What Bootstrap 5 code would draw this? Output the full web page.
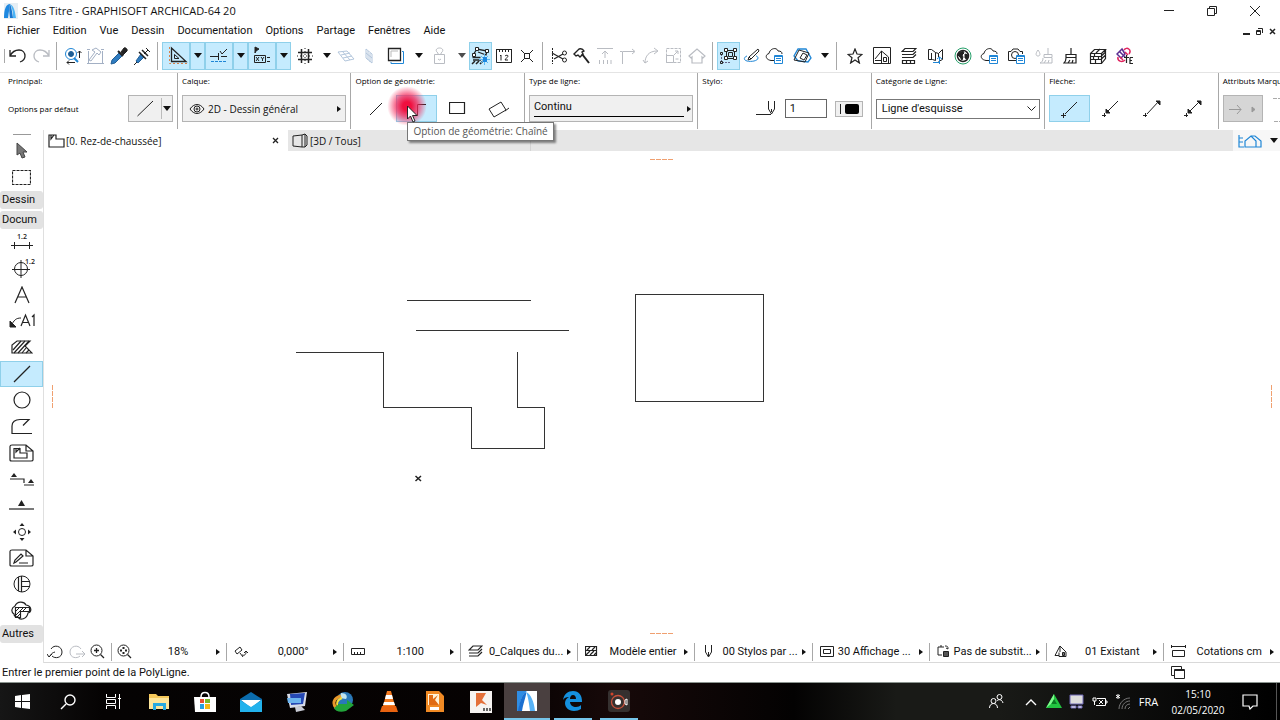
<!DOCTYPE html>
<html lang="fr">
<head>
<meta charset="utf-8">
<meta name="viewport" content="width=device-width, initial-scale=1">
<title>Sans Titre - GRAPHISOFT ARCHICAD-64 20</title>
<link href="https://cdn.jsdelivr.net/npm/bootstrap@5.3.0/dist/css/bootstrap.min.css" rel="stylesheet">
<style>
:root { --hot: #c5ebfe; --hot-line: #8fd0ea; --rule: #a8a8a8; --blue: #1f86d6; }
body { font: 11px/16px Roboto, "Open Sans", sans-serif; color: #111; background: #fff; overflow: hidden; }
button, input, select { font: inherit; color: inherit; }
svg { display: block; flex: none; fill: none; stroke: #222; stroke-width: 1; }
svg text { font-family: "Open Sans", sans-serif; fill: #222; stroke: none; }
.gray { stroke: #b9bcc2; }
.plain { border: 0; background: none; padding: 0; display: flex; align-items: center; justify-content: center; flex: none; }
.wide-text { font-family: "Open Sans", sans-serif; }
.label-text { font: 8px/12px "Open Sans", sans-serif; color: #000; }

.title-row { height: 21px; }
.menu-row { height: 20px; }
.menu-row a { color: #111; text-decoration: none; }
.win-btn { width: 43px; height: 20px; }

.tool-row { height: 32px; border-bottom: 1px solid #e4e4e4; padding-bottom: 2px; }
.tb { width: 23px; height: 28px; }
.tb-m { width: 27px; height: 28px; }
.tb-w { width: 28px; height: 28px; }
.tb-x { width: 31px; height: 28px; }
.dd { width: 15px; height: 28px; }
.on { background: var(--hot); box-shadow: inset 0 0 0 1px var(--hot-line); }
.vsep { width: 9px; height: 28px; flex: none; background: linear-gradient(var(--rule), var(--rule)) center / 1px 100% no-repeat; }
.arrow-d { width: 0; height: 0; border: 4px solid transparent; border-top: 5px solid #111; border-bottom: 0; }
.arrow-r { width: 0; height: 0; border: 3px solid transparent; border-left: 4px solid #111; border-right: 0; flex: none; }

.info-row { height: 56px; overflow-x: clip; }
.info-cell { width: 13.55%; flex: none; border-right: 1px solid var(--rule); padding: 2px 4px 0; }
.info-cell:first-child { width: 178px; padding-left: 8px; }
.info-cell:last-child { border: 0; }
.info-body { height: 43px; }
.flat { background: #f0f0f0; border: 1px solid #b4b4b4; height: 27px; }
.split-btn { width: 45px; }
.geo { width: 41px; height: 27px; }
.pen-box { width: 42px; height: 19px; border: 1px solid #666; padding: 0 4px; }
.cat-box { width: 165px; height: 20px; border: 1px solid #777; padding: 0 5px; background: #fff; appearance: none; }
.spot { left: 36px; top: 13px; width: 40px; height: 40px; background: radial-gradient(circle, #f0103f 0 15%, rgba(244, 40, 90, .75) 38%, rgba(255, 120, 160, 0) 70%); }
.pointer { left: 56px; top: 32px; z-index: 3; }
.tip { left: 56px; top: 49px; z-index: 2; height: 19px; border: 1px solid #777; background: #fff; color: #555; padding: 0 5px; box-shadow: 2px 2px 2px rgba(0, 0, 0, .45); white-space: nowrap; }

.palette { width: 44px; flex: none; border-right: 1px solid #dfdfdf; }
.palette .tool { width: 43px; min-height: 0; flex: 1 1 0; }
.palette .fixed-tool { width: 43px; height: 27px; }
.group-btn { width: 43px; height: 18px; background: #e2e2e2; border: 0; border-radius: 3px; padding: 0 0 0 2px; text-align: left; line-height: 16px; }
.tab-row { height: 21px; background: #e6e6e6; }
.tab-a { width: 244px; background: #fff; }
.tab-b { width: 243px; border-right: 1px solid #d4d4d4; }
.nav-pop { width: 47px; background: #f7f7f7; }
.quick { height: 22px; border-bottom: 1px solid #d9d9d9; }
.quick-zoom { width: 67px; }
.quick-item { flex: 1 1 0; min-width: 0; border-left: 1px solid var(--rule); height: 18px; padding: 0 6px 0 7px; white-space: nowrap; }
.status-row { height: 20px; border-bottom: 1px solid #8b948f; }
.doc-area { min-height: 0; }

.task-row { height: 37px; background: linear-gradient(90deg, #161616 0, #050303 8%, #060202 40%, #170909 48%, #030202 62%, #191a17 70%, #191a17 78%, #060606 94%, #000 100%); color: #fff; }
.task-row svg { stroke: #fff; }
.tk { width: 45px; height: 37px; }
.ta { width: 46px; height: 37px; }
.run { border-bottom: 2px solid #76c5ea; width: 38px; margin: 0 4px; }
.front { background: #4a4040; border-bottom: 2px solid #76c5ea; }
.tray { width: 23px; height: 37px; }
.clock { width: 70px; text-align: center; }
.edge { width: 10px; height: 37px; border-right: 1px solid #555; margin-right: 3px; }
</style>
</head>
<body class="d-flex flex-column vh-100">

<header class="position-relative z-3">
  <div class="title-row d-flex align-items-center pe-1">
    <svg class="ms-1 me-1" width="14" height="16" viewBox="0 0 14 16" style="stroke:none"><path fill="#e6eef4" d="M0 0h14v16H0z"/><path fill="#1e88e0" d="M0 15C0 6 2 1 6 1L4 15z"/><path fill="#4db4f5" d="M6 1c4 2 5 7 6 14H9C9 8 8 4 6 1z"/><path fill="#1976cf" d="M6 1c2 4 2 9 3 14H6C5 9 5 5 6 1z"/></svg>
    <span class="flex-grow-1 wide-text">Sans Titre - GRAPHISOFT ARCHICAD-64 20</span>
    <button class="plain win-btn" aria-label="Réduire"><svg width="10" height="10"><path d="M0 4.500h10"/></svg></button>
    <button class="plain win-btn" aria-label="Restaurer"><svg width="10" height="10"><path d="M.5 2.500h7v7h-7zM2.500 2V.5h7v7H8"/></svg></button>
    <button class="plain win-btn" aria-label="Fermer"><svg width="10" height="10"><path d="M0 0l10 10M10 0L0 10"/></svg></button>
  </div>
  <nav class="menu-row d-flex align-items-center" aria-label="Menu principal">
    <div class="d-flex flex-grow-1" style="gap:13px;padding-left:7px">
      <a href="#">Fichier</a><a href="#">Edition</a><a href="#">Vue</a><a href="#">Dessin</a><a href="#">Documentation</a><a href="#">Options</a><a href="#">Partage</a><a href="#">Fenêtres</a><a href="#">Aide</a>
    </div>
    <div class="d-flex pe-1" style="gap:6px">
      <button class="plain" aria-label="Réduire le document"><svg width="7" height="8"><path stroke-width="2" d="M0 7h7"/></svg></button>
      <button class="plain" aria-label="Restaurer le document"><svg width="7" height="8"><path d="M.5 3.500h4v4h-4zM2 1.500h4.500V6"/><path d="M0 4.500h5"/></svg></button>
      <button class="plain" aria-label="Fermer le document"><svg width="7" height="8"><path stroke-width="1.500" d="M1 2l5 5M6 2L1 7"/></svg></button>
    </div>
  </nav>

  <div class="tool-row d-flex align-items-center ps-1" role="toolbar" aria-label="Barre standard">
    <span style="width:2px;height:14px;border-left:1px solid #a8a8a8"></span>
    <button class="plain tb" aria-label="Annuler"><svg width="20" height="18" viewBox="0 0 20 18"><path stroke-width="1.300" d="M2 3v6h6M2 9c2-4 5-6 9-6 4 0 6 3 6 6s-2 5-5 6"/></svg></button>
    <button class="plain tb" aria-label="Rétablir"><svg class="gray" width="20" height="18" viewBox="0 0 20 18"><path stroke-width="1.300" d="M18 3v6h-6M18 9c-2-4-5-6-9-6-4 0-6 3-6 6s2 5 5 6"/></svg></button>
    <span class="vsep"></span>
    <button class="plain tb" aria-label="Rechercher"><svg width="20" height="20" viewBox="0 0 20 20"><circle cx="8" cy="8" r="5.500" stroke="#1f86d6"/><circle cx="8" cy="8" r="2.500" fill="#1f5f96" stroke="#1f5f96"/><path stroke="#1f86d6" stroke-width="2" d="M11 12l4 4"/><path d="M16.500 12V5M14.500 7l2-2 2 2M12 16.500H4M6 14.500l-2 2 2 2"/></svg></button>
    <button class="plain tb" aria-label="Options"><svg width="20" height="20" viewBox="0 0 20 20" style="stroke:#a3b0c4"><path d="M2.500 5v12.500h14V5"/><path d="M1 3.500h3M15 3.500h3M1 17.500h3M15 17.500h3M6 4l4-2 5 4-2 3-2-2-6 8-2-1 6-8z"/></svg></button>
    <button class="plain tb" aria-label="Prélever"><svg width="18" height="20" viewBox="0 0 18 20"><path fill="#2f7cc0" stroke="#235f96" d="M9 7l3 3-7 7-4 1 1-4z"/><path stroke-width="2" d="M8 5l5 5"/><path fill="#222" d="M11 6l3-4c1-1 4 1 3 3l-4 4z"/></svg></button>
    <button class="plain tb" aria-label="Injecter"><svg width="18" height="20" viewBox="0 0 18 20"><path fill="#2f7cc0" stroke="#235f96" d="M8 8l3 3-6 6-2-2z"/><path d="M4 16l-3 3M11 8l4-4M13 2l4 4"/><path stroke-width="1.500" d="M6 6l7 7M9 4l6 6"/></svg></button>
    <span class="vsep"></span>
    <button class="plain tb-w on" aria-label="Lignes guides"><svg class="ms-1" width="20" height="20" viewBox="0 0 20 20"><path stroke-width="1.300" d="M3.500 2v13.500H18z"/><path d="M6.500 8.500v4h4.500z"/><path stroke="#d9814a" stroke-dasharray="2 2" d="M1.500 1v16.500H20"/></svg></button><button class="plain dd on" aria-label="Menu lignes guides"><span class="arrow-d"></span></button>
    <button class="plain tb-w on" aria-label="Accrochage"><svg width="20" height="20" viewBox="0 0 20 20"><path d="M1 10.500h8M9.500 7v7M12 10.500h6M11 5l2 3 5-5"/><path stroke="#1f86d6" stroke-dasharray="3 1" d="M2 15.500h16"/></svg></button><button class="plain dd on" aria-label="Menu accrochage"><span class="arrow-d"></span></button>
    <button class="plain tb-w on" aria-label="Coordonnées"><svg width="20" height="20" viewBox="0 0 20 20"><path fill="#222" d="M3 7V1l4 2-3 2z"/><path d="M2.500 9.500h11v7h-11zM15 11.500h3M15 15.500h3"/><path d="M4 11l3 4M7 11l-3 4M9 11l1.500 2L12 11M10.500 13v2"/></svg></button><button class="plain dd on" aria-label="Menu coordonnées"><span class="arrow-d"></span></button>
    <button class="plain tb-w" aria-label="Trame"><svg width="18" height="18" viewBox="0 0 18 18"><path stroke-width="1.500" d="M5.500 2v14M12.500 2v14M2 5.500h14M2 12.500h14"/><path stroke-dasharray="1 2" d="M9 1v16M1 9h16"/></svg></button><button class="plain dd" aria-label="Menu trame"><span class="arrow-d"></span></button>
    <button class="plain tb" aria-label="Plan de travail"><svg width="20" height="14" viewBox="0 0 20 14"><path stroke="#b3c6dc" d="M2 3l9-1 7 8-9 2zM5 6l9-2M7 9l9-2M6 2l8 9"/></svg></button>
    <button class="plain tb" aria-label="Plan vertical"><svg width="12" height="18" viewBox="0 0 12 18"><path stroke="#b3c6dc" d="M3 2l6 5v9l-6-5zM5 4v9M7 6v9M3 6l6 5"/></svg></button>
    <button class="plain tb-x" aria-label="Référence"><svg width="18" height="18" viewBox="0 0 18 18"><path stroke-width="1.300" d="M1.500 1.500h12v12h-12z"/><path d="M4 10V4h7" stroke="#bbb"/><path stroke="#1f86d6" d="M15 4.500h1.500v12H4V15"/></svg></button><button class="plain dd" aria-label="Menu référence"><span class="arrow-d"></span></button>
    <button class="plain tb-w" aria-label="Verrouiller"><svg class="gray" width="16" height="20" viewBox="0 0 16 20"><path d="M2.500 8.500h10v9h-10zM4.500 8.500h6M6 7C3 5 4 2 7.500 2S12 5 9 7v1M6 7v1M6 13l1.500 1L9 13"/></svg></button><button class="plain dd" aria-label="Menu verrou"><span class="arrow-d opacity-75"></span></button>
    <button class="plain tb on" aria-label="Suivi"><svg width="20" height="20" viewBox="0 0 20 20"><path stroke-width="1.300" d="M2 9l4-6 10 2-1 4-8-3M1.500 11.500h8M2 14h8"/><path fill="#fff" d="M4.500 1.500h3v3h-3zM14.500 3.500h3v3h-3zM1.500 7.500h3v3h-3z"/><path stroke-width="1.500" d="M1 18l3-3M5 18l3-3M9 18l3-3"/><path stroke="#5cb8f2" d="M13.500 8v11M8 13.500h11M10 10l7 7M17 10l-7 7"/><path stroke="none" fill="#1e88e0" d="M12 11h4v5h-4z"/></svg></button>
    <button class="plain tb" aria-label="Mesurer"><svg width="18" height="16" viewBox="0 0 18 16"><path d="M1.500 1v13.500h15V1M1 1.500h16M4.500 1v3M7.500 1v3M10.500 1v3M13.500 1v3"/><path d="M5 8l1-1v5.500M10 8c1-1 3-1 3 0s-2 2-3 4h3"/></svg></button>
    <button class="plain tb" aria-label="Intersection"><svg width="14" height="14" viewBox="0 0 14 14"><path d="M1 1l12 12M13 1L1 13"/><path fill="#fff" d="M4.500 4.500h5v5h-5z"/></svg></button>
    <span class="vsep"></span>
    <button class="plain tb" aria-label="Couper"><svg width="18" height="18" viewBox="0 0 18 18"><path stroke-dasharray="2 1" d="M2.500 1v16"/><path stroke-width="1.200" d="M2 6l11 6M4 12l9-5"/><circle cx="14.500" cy="6" r="2"/><circle cx="14.500" cy="13" r="2"/></svg></button>
    <button class="plain tb" aria-label="Ajuster"><svg width="18" height="18" viewBox="0 0 18 18"><path fill="#fff" stroke-width="1.400" d="M1 7l5-5c3-1 4 0 5 2L9 5l1 2-3 3-2-2-2 1z"/><path stroke-width="2" d="M9 7l7 9"/></svg></button>
    <button class="plain tb" aria-label="Elévation"><svg class="gray" width="18" height="18" viewBox="0 0 18 18"><path d="M1 1.500h16M9 11V4M6 7l3-3 3 3M3.500 17v-4M7.500 17v-4M11.500 17v-4M15 17v-4"/></svg></button>
    <button class="plain tb" aria-label="Angle"><svg class="gray" width="18" height="18" viewBox="0 0 18 18"><path d="M3.500 17V4.500H15M13 2l3 2.500L13 7M1 4.500h2"/></svg></button>
    <button class="plain tb" aria-label="Courbe"><svg class="gray" width="18" height="18" viewBox="0 0 18 18"><path d="M3 16C3 9 7 4 15 4M12 1l4 3-4 3M1 13l2 3 3-2"/></svg></button>
    <button class="plain tb" aria-label="Redimensionner"><svg class="gray" width="18" height="18" viewBox="0 0 18 18"><path stroke-dasharray="3 1" d="M1.500 1.500h14v14h-14z"/><path d="M1.500 8.500h7v7h-7zM9 8l4-4M10 4h3v3M10.500 12h3"/></svg></button>
    <button class="plain tb" aria-label="Toit"><svg class="gray" width="18" height="18" viewBox="0 0 18 18"><path stroke-width="1.200" d="M1 9l8-7 8 7-2 2-1-1v6H4v-6l-1 1z"/></svg></button>
    <span class="vsep"></span>
    <button class="plain tb on" aria-label="Grouper"><svg width="20" height="18" viewBox="0 0 20 18"><path d="M7.500 3.500h8v8h-8z"/><path d="M2.500 7v8.500h9" stroke="#668" stroke-dasharray="2 1"/><path fill="#fff" d="M5.500 1.500h3v3h-3zM14.500 1.500h3v3h-3zM5.500 9.500h3v3h-3zM14.500 9.500h3v3h-3z"/><path d="M9.500 5.500h4v4h-4zM1.500 5.500h2v2h-2zM1.500 14.500h2v2h-2z"/></svg></button>
    <button class="plain tb" aria-label="Crayon"><svg width="18" height="18" viewBox="0 0 18 18"><path fill="#fff" d="M15 2l1 2-8 8-3 1 1-3zM6 10l2 2"/><path stroke="#1f86d6" d="M4 9c-3 1-4 4 0 5s11 0 11-3c0-1-1-2-2-2"/></svg></button>
    <button class="plain tb" aria-label="Favoris forme"><svg width="20" height="18" viewBox="0 0 20 18"><path d="M9 13.500H6c-6-1-6-6-2-7C5 1 12 0 13 4c3 0 4 1 4 3"/><path fill="#fff" stroke="#1f86d6" d="M9.500 8.500h8v8h-8z"/><path stroke="#1f86d6" d="M9 9.500h9M11 11.500h5M11 13.500h5"/></svg></button>
    <button class="plain tb-x" aria-label="Texture"><svg width="20" height="18" viewBox="0 0 20 18"><path stroke="#1f86d6" stroke-width="1.300" d="M6 2h8l5 9-3 4-10-1-4-5z"/><path d="M2 13l5-10 10 3-4 9z"/><path d="M8 11l3-5 4 2-3 5z"/></svg></button><button class="plain dd" aria-label="Menu texture"><span class="arrow-d"></span></button>
    <span class="vsep"></span>
    <button class="plain tb-m" aria-label="Favoris"><svg width="16" height="16" viewBox="0 0 16 16"><path stroke-width="1.200" d="M8 1l2 5 5 .4-4 3.300 1.400 5.300L8 12l-4.400 3L5 9.700 1 6.400 6 6z"/></svg></button>
    <button class="plain tb-m" aria-label="Maison"><svg width="18" height="18" viewBox="0 0 18 18"><path d="M.5.5h17v16H.5zM2 12L8.500 4l7 6v6.500M8.500 4v12M10.500 10.500h3v4h-3zM2 13.500h7"/></svg></button>
    <button class="plain tb-m" aria-label="Calques"><svg width="16" height="18" viewBox="0 0 16 18"><path stroke-width="1.200" d="M4 1.500h11l-3 3H1zM1 7.500h11l3-3M1 10.500h11l3-3M1.500 13.500h12v3h-12zM5.500 13v4M9.500 13v4"/></svg></button>
    <button class="plain tb-m" aria-label="Profils"><svg width="18" height="18" viewBox="0 0 18 18"><path d="M1.500 2.500h3l4 3v8l-3-1h-4zM4.500 6v6M8.500 5.500l3 1 4-4v10l-4 2M11.500 6.500V10"/><path stroke="#1f86d6" d="M6 15.500h7M12.500 10v7M10 12l2.500-2 2.500 2"/></svg></button>
    <button class="plain tb-m" aria-label="Globe"><svg width="18" height="18" viewBox="0 0 18 18"><circle cx="9" cy="9" r="8" stroke="#27a06b"/><circle cx="9" cy="9" r="5.500" stroke-width="1.500"/><path fill="#222" d="M5 6l4-2 1 2-2 2 1 2-1 3-2-3-2-2zM11 7l3 1-1 4-2-1z"/></svg></button>
    <button class="plain tb-m" aria-label="Nuage"><svg width="20" height="18" viewBox="0 0 20 18"><path d="M9 13.500H6c-6-1-6-6-2-7C5 1 12 0 13 4c3 0 4 1 4 3"/><path fill="#fff" stroke="#1f86d6" d="M9.500 8.500h8v8h-8z"/><path stroke="#1f86d6" d="M9 9.500h9M11 11.500h5M11 13.500h5"/></svg></button>
    <button class="plain tb-m" aria-label="Caméra"><svg width="20" height="18" viewBox="0 0 20 18"><path d="M9 13.500H1.500v-9H4L6 2h5l2 2.500h2.500V7"/><circle cx="8" cy="8" r="3.500"/><path fill="#fff" stroke="#1f86d6" d="M9.500 8.500h8v8h-8z"/><path stroke="#1f86d6" d="M9 9.500h9M11 11.500h5M11 13.500h5"/></svg></button>
    <button class="plain tb-m" aria-label="Transférer"><svg class="gray" width="20" height="18" viewBox="0 0 20 18"><path d="M4 3c-3 4-2 6 0 6s3-2 0-6zM14 1v6M10 7.500h8v3h-8zM9 11c0 3-1 4-3 5h12v-5M10 16l2-3M14 16l1-3"/></svg></button>
    <button class="plain tb-m" aria-label="Pinceau"><svg width="16" height="18" viewBox="0 0 16 18"><path stroke-width="1.200" d="M8 1v6M3 7.500h10v3H3zM3 11c0 3-1 4-2 5h12v-5M5 16l2-3M9 16l1-3"/></svg></button>
    <button class="plain tb-m" aria-label="Briques"><svg width="18" height="18" viewBox="0 0 18 18"><path stroke-width="1.200" d="M1.500 6.500h11v10h-11zM1.500 6.500l4-4h11l-4 4M16.500 2.500v9l-4 5M1 9.500h11l4-4M1 12.500h11l4-4M5.500 6v3M9.500 9v3M4.500 9v3M6.500 12v4M7 6l4-4"/></svg></button>
    <button class="plain tb-m" aria-label="Extension"><svg width="18" height="18" viewBox="0 0 18 18"><path stroke="#5a2d91" stroke-width="1.500" d="M6 2L1 7l4 4 4-4zM4 5l5 5"/><path stroke="#e0245e" stroke-width="1.500" d="M8 3c3-4 8 0 5 4M9 5l3 3M2 10c-1 4 4 6 7 3M4 10l3 3"/><path stroke-width="1.200" d="M10.500 8v8M8 10.500h5M14 10.500v6h3M14 10.500h3M14 13.500h2"/></svg></button>
  </div>

  <div class="info-row d-flex">
    <section class="info-cell"><div class="label-text">Principal:</div>
      <div class="info-body d-flex align-items-center justify-content-between"><span class="label-text">Options par défaut</span>
        <button class="plain flat split-btn" aria-label="Outil ligne"><svg width="32" height="25"><path d="M8.500 20L24 5"/></svg><span style="width:1px;height:21px;background:#bbb"></span><span class="arrow-d ms-auto me-auto"></span></button></div>
    </section>
    <section class="info-cell"><div class="label-text">Calque:</div>
      <div class="info-body d-flex align-items-center"><button class="plain flat w-100 px-1 wide-text" style="font-size:10px"><svg width="16" height="12" viewBox="0 0 16 12" style="margin-left:2px"><path d="M1 6c4-6 10-6 14 0-4 6-10 6-14 0z"/><circle cx="8" cy="6" r="3"/><circle cx="8" cy="6" r="1"/></svg><span class="flex-grow-1 text-start" style="padding-left:3px">2D - Dessin général</span><span class="arrow-r"></span></button></div>
    </section>
    <section class="info-cell position-relative"><div class="label-text">Option de géométrie:</div>
      <div class="info-body d-flex align-items-center">
        <button class="plain geo" aria-label="Simple"><svg width="14" height="14"><path d="M1 13L13 1"/></svg></button>
        <button class="plain geo on" aria-label="Chaîné"><svg width="22" height="14"><path d="M2 13.500h9.500v-11H20"/></svg></button>
        <button class="plain geo" aria-label="Rectangle"><svg width="17" height="13"><path stroke-width="1.200" d="M.5.5h15v11H.5z"/></svg></button>
        <button class="plain geo" aria-label="Rectangle incliné"><svg width="24" height="18"><path d="M2 9l12-7 5 8-12 7zM18 11l4-3"/></svg></button>
      </div>
      <span class="spot position-absolute rounded-circle"></span>
      <svg class="pointer position-absolute" width="12" height="18" viewBox="0 0 12 18"><path fill="#fff" d="M.5 1v13l3-3 2.500 6 2-1-2.500-5.500H10z"/></svg>
      <div class="tip position-absolute wide-text" role="tooltip" style="font-size:10px">Option de géométrie: Chaîné</div>
    </section>
    <section class="info-cell"><div class="label-text">Type de ligne:</div>
      <div class="info-body d-flex align-items-center"><button class="plain flat w-100 px-1"><span class="flex-grow-1 text-start"><span class="d-block" style="line-height:15px">Continu</span><span class="d-block bg-black" style="height:1px;margin:2px 3px 2px 0"></span></span><span class="arrow-r" style="margin-right:-3px"></span></button></div>
    </section>
    <section class="info-cell"><label class="label-text d-block" for="pen">Stylo:</label>
      <div class="info-body d-flex align-items-center justify-content-end pe-1">
        <svg width="22" height="18"><path d="M1 14.500h15M13.500 1v8l3 5 3-5V1M16.500 9v3"/></svg>
        <input id="pen" class="pen-box ms-2 me-2" value="1">
        <button class="plain flat" style="width:28px;height:16px" aria-label="Couleur du stylo"><svg width="24" height="12"><path d="M3.500 1v10"/><rect x="8" y="1" width="14" height="10" rx="2" fill="#000" stroke="none"/></svg></button></div>
    </section>
    <section class="info-cell"><label class="label-text d-block" for="cat">Catégorie de Ligne:</label>
      <div class="info-body d-flex align-items-center position-relative"><select id="cat" class="cat-box"><option>Ligne d'esquisse</option></select><svg class="position-absolute end-0 me-1" width="9" height="6"><path d="M.5.5l4 4 4-4"/></svg></div>
    </section>
    <section class="info-cell"><div class="label-text">Flèche:</div>
      <div class="info-body d-flex align-items-center">
        <button class="plain geo on" aria-label="Sans flèche"><svg width="20" height="20"><path d="M5 15L17 3M1 16.500h5M3.500 14v5"/></svg></button>
        <button class="plain geo" aria-label="Flèche début"><svg width="20" height="20"><path d="M5 14L17 2M1 16.500h4M3.500 14v4"/><path fill="#222" d="M5 14v-4l4 4z"/></svg></button>
        <button class="plain geo" aria-label="Flèche fin"><svg width="20" height="20"><path d="M5 15L17 2M1 16.500h4M3.500 14v4"/><path fill="#222" d="M18 2v4l-4-4z"/></svg></button>
        <button class="plain geo" aria-label="Flèche double"><svg width="20" height="20"><path d="M5 14L17 2M1 16.500h4M3.500 14v4"/><path fill="#222" d="M18 2v4l-4-4zM5 14v-4l4 4z"/></svg></button>
      </div>
    </section>
    <section class="info-cell"><div class="label-text text-nowrap">Attributs Marqu</div>
      <div class="info-body d-flex align-items-center gap-2"><button class="plain flat" style="width:40px;background:#d6d6d6" aria-label="Marqueur"><svg width="34" height="14" style="stroke:#999"><path d="M3 7.500h12M11 3l4 4.500-4 4.500"/><path fill="#999" d="M26 5v5l3-2.500z"/></svg></button><svg width="20" height="26"><path stroke="#aaa" d="M2 2.500h18M3 25.500h17" stroke-dasharray="4 1"/></svg></div>
    </section>
  </div>
</header>

<main class="d-flex flex-grow-1 doc-area" style="padding-top:1px">
  <aside class="palette d-flex flex-column" aria-label="Outils">
    <div class="d-flex flex-column align-items-start" style="padding-top:4px">
      <span style="width:18px;height:1px;background:#999;margin-left:13px"></span>
      <button class="plain fixed-tool pt-1" aria-label="Flèche"><svg width="12" height="17" viewBox="0 0 12 17"><path fill="#777" stroke="#444" d="M1 1v12l3-2 2 5 3-1-2-5h4z"/></svg></button>
      <button class="plain fixed-tool pt-1" aria-label="Rectangle de sélection"><svg width="19" height="15"><path stroke-width="1.200" stroke-dasharray="3 1" d="M.5.5h18v14H.5z"/></svg></button>
      <button class="group-btn" style="margin:2px 0">Dessin</button>
      <button class="group-btn">Docum</button>
    </div>
    <div class="d-flex flex-column flex-grow-1">
      <button class="plain tool" aria-label="Cotation"><svg width="24" height="20"><text x="7" y="7" font-size="7" font-weight="600">1.2</text><path d="M1 13.500h22M4.500 10v7M19.500 10v7"/></svg></button>
      <button class="plain tool" aria-label="Cote de niveau"><svg width="27" height="22"><circle cx="13" cy="12" r="6.500"/><path d="M4 12.500h18M13 3v18"/><text x="17" y="7" font-size="7" font-weight="600">1.2</text></svg></button>
      <button class="plain tool" aria-label="Texte"><svg width="16" height="18"><path stroke-width="1.200" d="M1 17L8 1l7 16M3.500 11h9"/></svg></button>
      <button class="plain tool" aria-label="Etiquette"><svg width="26" height="16"><path d="M2 13c3-6 5-8 10-8"/><path fill="#222" d="M1 8v6h6z"/><path stroke-width="1.200" d="M12 13l4.500-11L21 13M14 9.500h5M23 4l2-2v11"/></svg></button>
      <button class="plain tool" aria-label="Hachure"><svg width="22" height="14"><path stroke-width="1.200" d="M1 13V5l5-4h13l-5 5 7 7z"/><path stroke-width="1.200" d="M2 10L10 1M3 13L14 1M7 13L18 1M11 13l4-5M15 13l3-3"/></svg></button>
      <button class="plain tool on" aria-label="Ligne"><svg width="18" height="18"><path stroke-width="1.200" d="M1 17L17 1"/></svg></button>
      <button class="plain tool" aria-label="Cercle"><svg width="18" height="18"><circle cx="9" cy="9" r="8" stroke-width="1.200"/></svg></button>
      <button class="plain tool" aria-label="Polyligne"><svg width="22" height="17"><path stroke-width="1.200" d="M21 15.500H1V8c0-4 3-6.500 8-6.500h9l-6 6"/></svg></button>
      <button class="plain tool" aria-label="Dessin"><svg width="25" height="18"><path stroke-width="1.200" d="M1 2.500C1 1 2 1 3 1h14l7 6v9c0 1-1 1-2 1H3c-1 0-2 0-2-1zM17 1v6h7M5 4.500h6V9h7v5H5zM7 4v4l4-4"/></svg></button>
      <button class="plain tool" aria-label="Coupe"><svg width="26" height="14"><path stroke-width="1.200" d="M1 7h14v4M15 13h10"/><path fill="#222" stroke="none" d="M2 5l3-4 3 4zM19 11l3-4 3 4z"/></svg></button>
      <button class="plain tool" aria-label="Elévation"><svg width="25" height="12"><path stroke-width="1.200" d="M0 10h25"/><path fill="#222" stroke="none" d="M9 7l3.500-6L16 7z"/></svg></button>
      <button class="plain tool" aria-label="Elévation intérieure"><svg width="18" height="18"><circle cx="9" cy="9" r="3.500"/><path fill="#222" stroke="none" d="M6.500 3L9 0l2.500 3zM6.500 15L9 18l2.500-3zM3 6.500L0 9l3 2.500zM15 6.500L18 9l-3 2.500z"/></svg></button>
      <button class="plain tool" aria-label="Feuille de travail"><svg width="25" height="18"><path stroke-width="1.200" d="M1 2.500C1 1 2 1 3 1h14l7 6v9c0 1-1 1-2 1H3c-1 0-2 0-2-1zM17 1v6h7M10 14h9M5 14l1-3 6-6 2 2-7 6z"/></svg></button>
      <button class="plain tool" aria-label="Détail"><svg width="18" height="18"><circle cx="9" cy="9" r="8"/><path stroke-width="1.200" d="M5.500 2v14M8.500 1v16M9 6.500h7M9 11.500h7"/></svg></button>
      <button class="plain tool" aria-label="Modification"><svg width="21" height="19"><path stroke-width="1.200" d="M3 13c-3-2-3-6 1-8C6 0 13 0 15 4c6 1 6 7 2 8-1 6-8 8-10 4-3 0-4-1-4-3zM4.500 6.500h14v4h-9v6h-5z"/><path d="M5 14l8-8M5 10l4-4M12 10l4-4M6 16l4-4"/></svg></button>
    </div>
    <button class="group-btn" style="margin:1px 0 20px">Autres</button>
  </aside>

  <div class="d-flex flex-column flex-grow-1" style="min-width:0">
    <div class="tab-row d-flex wide-text" style="font-size:10px" role="tablist">
      <div class="tab-a d-flex align-items-center ps-1"><svg width="18" height="14"><path stroke-width="1.200" d="M1 1h7v4h8v8H1zM3 1v4l3-4"/></svg><a href="#" role="tab" class="flex-grow-1 text-reset text-decoration-none">[0. Rez-de-chaussée]</a><button class="plain" style="margin-right:9px" aria-label="Fermer l'onglet"><svg width="7" height="7"><path stroke-width="1.300" d="M1 1l5 5M6 1L1 6"/></svg></button></div>
      <div class="tab-b d-flex align-items-center ps-1"><svg width="18" height="16"><path d="M1 3l9-1v12l-9-1zM10 2l3-1 2 2v9l-2 2-3 0M13 1v13"/></svg><a href="#" role="tab" class="text-reset text-decoration-none">[3D / Tous]</a></div>
      <div class="nav-pop d-flex align-items-center justify-content-end gap-2 ms-auto" style="padding-right:3px"><svg width="25" height="14" style="stroke:#1f86d6"><path stroke-width="1.200" d="M2 1v12h5M2 4h4M2 8h4M8 13V7l6-5 5 5v6zM14 2h4l6 5v6h-5"/></svg><span class="arrow-d" style="margin-right:-1px"></span></div>
    </div>

    <div class="flex-grow-1 overflow-hidden" style="min-height:0">
      <svg width="100%" height="100%" role="img" aria-label="Plan du rez-de-chaussée">
        <g shape-rendering="crispEdges" stroke="#333">
          <path d="M362.500 149.500H487M372 179.500h153M252 201.500h87.500v55h88v41h73v-41h-27v-56M591.500 143.500h128v107h-128z"/>
        </g>
        <path stroke-width="1.500" d="M371.500 325l5.500 5M377 325l-5.500 5"/>
        <g stroke="#f0a070" stroke-dasharray="5 1" shape-rendering="crispEdges">
          <path d="M606 8.500h24M606 482.500h24M8.500 234v24M1227.500 234v24"/>
        </g>
      </svg>
    </div>

    <div class="quick d-flex align-items-center">
      <div class="quick-zoom d-flex align-items-center justify-content-between" style="padding:0 6px 0 3px">
        <button class="plain" aria-label="Vue précédente"><svg width="16" height="14"><path d="M4 4c3-5 11-3 11 3s-7 7-10 4M0 9l2 3 3-3M2 12c2-2 2-4 6-5"/></svg></button>
        <button class="plain" aria-label="Vue suivante"><svg class="gray" width="16" height="14"><path d="M12 4C9-1 1 1 1 7s7 7 10 4M16 9h-9M13 6l3 3-3 3"/></svg></button>
        <button class="plain" aria-label="Zoom avant"><svg width="15" height="15"><circle cx="6.500" cy="6.500" r="5.500"/><path stroke-width="1.300" d="M10.500 10.500L14 14M4 6.500h5M6.500 4v5"/></svg></button>
      </div>
      <button class="plain quick-item" style="padding-left:5px"><svg width="15" height="15"><circle cx="6.500" cy="6.500" r="5.500"/><path stroke-width="1.300" d="M10.500 10.500L14 14"/><path stroke-width="2" d="M3 6.500h2M8 6.500h2M6.500 3v2M6.500 8v2"/></svg><span class="flex-grow-1 ps-2">18%</span><span class="arrow-r"></span></button>
      <button class="plain quick-item"><svg width="15" height="14"><path d="M1 6l5-4 2 3-5 4zM8 10c3 1 4-1 4-3M10 8l2-2 2 2M6 8l3 4"/></svg><span class="flex-grow-1 ps-1">0,000°</span><span class="arrow-r"></span></button>
      <button class="plain quick-item"><svg width="15" height="10"><path d="M.5 1.500h13v6H.5zM3.500 5v3M6.500 5v3M9.500 5v3"/></svg><span class="flex-grow-1 ps-1">1:100</span><span class="arrow-r"></span></button>
      <button class="plain quick-item"><svg width="15" height="13"><path stroke-width="1.200" d="M5 1h9l-4 4H1zM1 8h9l4-4M1 11h9l4-4"/></svg><span class="flex-grow-1 text-end pe-1">0_Calques du...</span><span class="arrow-r"></span></button>
      <button class="plain quick-item"><svg width="13" height="11"><path stroke-width="1.200" d="M.5.5h11v9H.5zM0 4.500h12M1 9l4-4M5 9l4-4M9 9l3-3M2 4l3-3M7 4l3-3"/></svg><span class="flex-grow-1 text-end pe-2">Modèle entier</span><span class="arrow-r"></span></button>
      <button class="plain quick-item"><svg width="13" height="14"><path d="M3.500 0v7l3 5 3-5V0M6.500 7v4"/></svg><span class="flex-grow-1 text-end pe-1">00 Stylos par ...</span><span class="arrow-r"></span></button>
      <button class="plain quick-item"><svg width="14" height="11"><path d="M.5.5h13v10H.5zM3.500 3.500h7v4h-7z"/></svg><span class="flex-grow-1 text-end pe-2">30 Affichage ...</span><span class="arrow-r"></span></button>
      <button class="plain quick-item"><svg width="13" height="13"><path d="M7 2H1v8h4M4 2V0M8 1c3 0 3 1 3 3M9 3l2 1"/><path fill="#555" d="M6.500 6.500h5v5h-5z"/></svg><span class="flex-grow-1 text-end pe-1">Pas de substit...</span><span class="arrow-r"></span></button>
      <button class="plain quick-item"><svg width="14" height="13"><path d="M1 10.500L6 1l6 6v4.500H5v-4M1 10.500h4M6 1v6"/><path fill="#777" d="M8.500 7.500h2v3h-2z"/></svg><span class="flex-grow-1 ps-1">01 Existant</span><span class="arrow-r"></span></button>
      <button class="plain quick-item"><svg width="15" height="13"><path d="M1 1.500h13M.5 0v3M14.500 0v3M1.500 5.500h12v6h-12z"/></svg><span class="flex-grow-1 text-end pe-2">Cotations cm</span><span class="arrow-r"></span></button>
    </div>
  </div>
</main>

<footer>
  <div class="status-row d-flex align-items-center justify-content-between">
    <span style="padding-left:2px">Entrer le premier point de la PolyLigne.</span>
    <svg width="15" height="14" style="margin-right:94px"><path d="M3 9.500H.5v-9h10V3"/><path d="M3.500 3.500h10v9h-10zM3 4.500h10"/></svg>
  </div>
  <nav class="task-row d-flex align-items-center" aria-label="Barre des tâches">
    <button class="plain tk" aria-label="Démarrer"><svg width="15" height="15" viewBox="0 0 15 15" style="stroke:none"><path fill="#fff" d="M0 2l6-1v6H0zM7 1l8-1v7H7zM0 8h6v6l-6-1zM7 8h8v7l-8-1z"/></svg></button>
    <button class="plain tk" aria-label="Rechercher"><svg width="16" height="16"><circle cx="10" cy="6" r="5" stroke-width="1.400"/><path stroke-width="1.500" d="M6 10l-5 5"/></svg></button>
    <button class="plain ta" aria-label="Vue des tâches"><svg width="16" height="15"><path d="M1.500 0v3.500h9V0M1.500 5.500h9v4h-9zM1.500 15v-3.500h9V15M14.500 0v15M13 4.500h3"/></svg></button>
    <button class="plain ta" aria-label="Explorateur"><svg width="20" height="18" style="stroke:none"><path fill="#f5c85a" d="M0 1h7l2 2h11v13H0z"/><path fill="#fde59a" d="M0 5h20v11H0z"/><path fill="#27a9e0" d="M4 17v-7h13v7h-3v-4H7v4z"/></svg></button>
    <button class="plain ta" aria-label="Store"><svg width="22" height="22" style="stroke:none"><path d="M7 6c0-6 8-6 8 0" stroke="#fff" stroke-width="1.500"/><path fill="#fff" d="M0 6h22v15H1z"/><path fill="#e94f32" d="M6 8h4v4H6z"/><path fill="#7ab929" d="M11 8h5v4h-5z"/><path fill="#29a0e0" d="M6 13h4v5H6z"/><path fill="#f6b915" d="M11 13h5v5h-5z"/></svg></button>
    <button class="plain ta" aria-label="Courrier"><svg width="22" height="20" style="stroke:none"><path fill="#0b6cad" d="M0 7l11-7 11 7v6H0z"/><path fill="#fff" d="M1 8h20l-10 8z"/><path fill="#22b2ec" d="M0 8l11 7 11-7v12H0z"/></svg></button>
    <button class="plain ta" aria-label="Poste de travail"><svg width="22" height="20" style="stroke:none"><path fill="#d7dce8" d="M1 2l20-2-2 14-15 2z"/><path fill="#2548b4" d="M4 2l15-1-2 11-12 1z"/><path fill="#6cb4ee" d="M1 6h14v5H2z"/><path fill="#c9ccd6" d="M9 15l6-1 4 4-9 2z"/></svg></button>
    <button class="plain ta" aria-label="Gestionnaire de téléchargement"><svg width="22" height="20" style="stroke:none"><circle cx="13" cy="8" r="8" fill="#2a78b8"/><path fill="#bfe3ef" d="M9 1c5 0 7 3 5 6L8 6z"/><path stroke="#e8992b" stroke-width="3" d="M9 4C2 6 0 11 4 16"/><path stroke="#f1df3c" stroke-width="2" d="M10 6c-5 2-6 5-4 9"/><path fill="#22a43a" d="M7 12h8v-4l7 5-8 6c-6 2-11 0-12-3z"/></svg></button>
    <button class="plain ta" aria-label="VLC"><svg width="18" height="21" style="stroke:none"><path fill="#f47b20" d="M7 0h4l4 15H3z"/><path fill="#fff" d="M6 4h6l1 4H5zM4 11h10l1 3H3z"/><path fill="#e96310" d="M2 15h14l2 6H0z"/></svg></button>
    <button class="plain ta" aria-label="Kiwi"><svg width="18" height="21" style="stroke:none"><path fill="#f08a24" d="M0 0h13l5 5v16H0z"/><path fill="#fff4d8" d="M2 3h11v11H2z"/><path fill="#e06c15" d="M3 4h4v4l5-4-3 5 4 5H3z"/><path fill="#fff" d="M4 16h9v3H4z"/></svg></button>
    <button class="plain ta" aria-label="Editeur"><svg width="22" height="22" style="stroke:none"><path fill="#f6f3f1" d="M0 0h22v22H0z"/><path fill="#e4703a" d="M6 2h10l-4 7 5 5-6-2-5 4z"/><path fill="#666" d="M13 17h2v3h-2zM16 17h2v3h-2zM19 17h2v3h-2z"/></svg></button>
    <button class="plain ta front" aria-label="ArchiCAD"><svg width="20" height="20" style="stroke:none"><path fill="#fff" d="M0 0h20v20H0z"/><path fill="#2f8de4" d="M0 20V0h10C4 4 3 12 2 20z"/><path fill="#1a6fd0" d="M1 20C3 10 5 3 9 1c1 2-2 8-4 19z"/><path fill="#57b2f6" d="M9 1c5 2 8 10 9 19h-5C12 12 11 5 9 1z"/></svg></button>
    <button class="plain ta run" aria-label="Edge"><svg width="20" height="20" style="stroke:none"><path fill="#1590de" d="M0 9C1 3 5 0 10 0c6 0 9 4 9 11H7c0 3 3 5 6 5 2 0 4-1 5-2v4c-2 1-4 2-7 2-6 0-9-4-9-8 0-3 2-5 4-6-3 0-5 1-6 3zm7-1h6c0-2-1-4-3-4S7 6 7 8z"/></svg></button>
    <button class="plain ta run" aria-label="Enregistreur"><svg width="22" height="22" style="stroke:none"><rect width="22" height="22" rx="3" fill="#35302f"/><circle cx="10" cy="12" r="6.500" stroke="#c7503b" stroke-width="1.300"/><circle cx="10" cy="12" r="3" fill="#fff"/><circle cx="4" cy="4" r="1.500" fill="#d2452c"/><path stroke="#fff" d="M17 10l2-1v6l-2-1z"/></svg></button>

    <button class="plain tk ms-auto" aria-label="Contacts"><svg width="15" height="15"><circle cx="4.500" cy="7" r="2.500"/><path d="M.5 14c0-6 8-6 8 0M8 7c1-2 5-2 6 2"/><circle cx="10.500" cy="3" r="2.500"/></svg></button>
    <button class="plain tray" aria-label="Icônes masquées"><svg width="12" height="8"><path stroke-width="1.400" d="M1 7l5-5 5 5"/></svg></button>
    <button class="plain tray" aria-label="Antivirus"><svg width="16" height="15" style="stroke:none"><path fill="#22c440" d="M8 0l8 14H0z"/><path fill="#087b22" d="M8 5l3 5H5z"/><path fill="#7dfa8c" d="M8 0L0 14l5-4 3-5z"/></svg></button>
    <button class="plain tray" aria-label="Ecran"><svg width="15" height="15" style="stroke:#6d66b4"><path fill="#ddd" d="M1 1h13v9H1z"/><path fill="#fff" d="M2 12h5v2H2zM9 12h4v2H9z"/></svg></button>
    <button class="plain tray" aria-label="Batterie"><svg width="16" height="12"><path d="M1 2h3v3H1zM2.500 5v4M5 2.500h8.500v7H4M14 5h1v2h-1M7 4l4 4M11 4L7 8"/></svg></button>
    <button class="plain tray" aria-label="Réseau"><svg width="16" height="16"><g stroke="#777"><path d="M4 15C4 9 9 4 15 4M7 15c0-5 4-8 8-8M10 15c0-3 2-5 5-5M13 15l2-2"/></g><path d="M3 0v5M1 1l4 3M5 1L1 4"/></svg></button>
    <button class="plain wide-text" style="width:29px" aria-label="Langue">FRA</button>
    <button class="plain clock wide-text" style="font-size:10px"><span>15:10<br>02/05/2020</span></button>
    <button class="plain" style="width:34px" aria-label="Notifications"><svg width="16" height="16"><path stroke-width="1.200" d="M1 1h14v11h-4l-3 3-1-3H1z"/></svg></button>
    <span class="edge"></span>
  </nav>
</footer>

<script src="https://cdn.jsdelivr.net/npm/bootstrap@5.3.0/dist/js/bootstrap.bundle.min.js"></script>
</body>
</html>
